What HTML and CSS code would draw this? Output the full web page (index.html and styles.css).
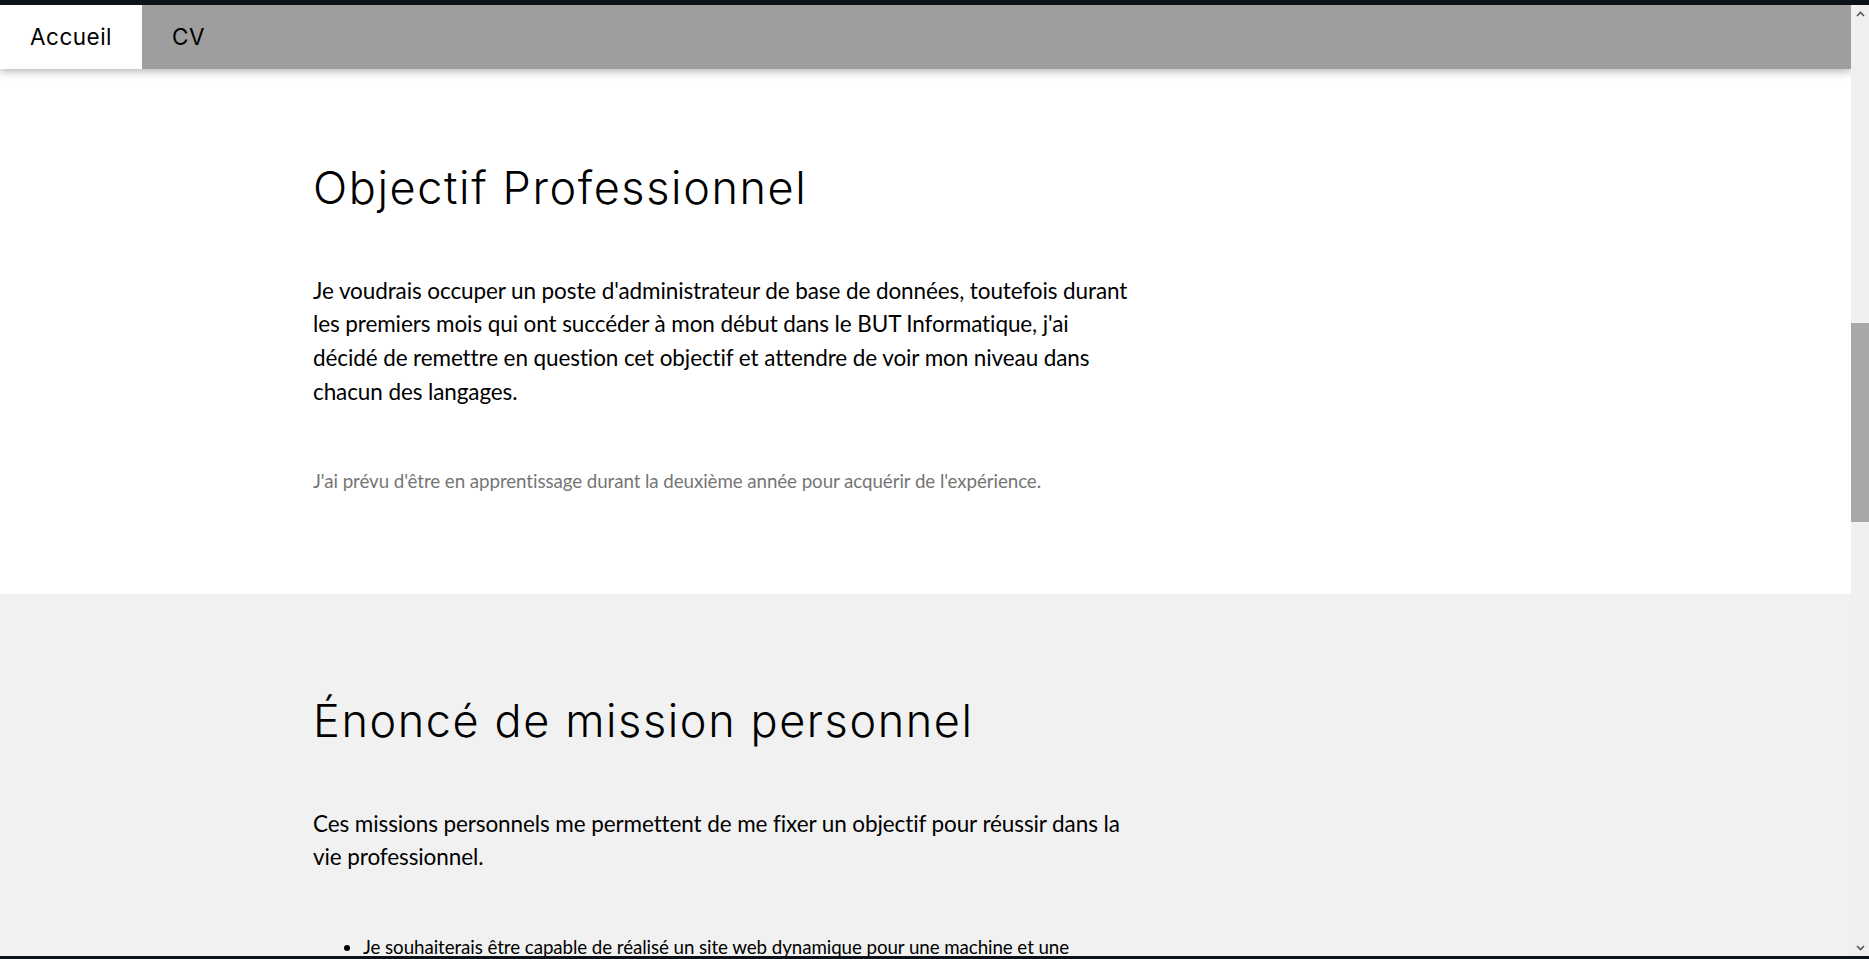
FILE: index.html
```html
<!DOCTYPE html>
<html lang="fr">
<head>
<meta charset="utf-8">
<title>Accueil</title>
<link rel="stylesheet" href="styles.css">
</head>
<body>
<div class="frame">
  <div class="frame-edge top"></div>
  <div class="viewport">
    <div class="page">
      <nav class="topbar">
        <a class="tab active" href="#">Accueil</a>
        <a class="tab" href="#">CV</a>
      </nav>
      <section class="band first">
        <div class="content">
          <div class="twothird">
            <h1 class="title">Objectif Professionnel</h1>
            <h5 class="lead">Je voudrais occuper un poste d'administrateur de base de données, toutefois durant les premiers mois qui ont succéder à mon début dans le BUT Informatique, j'ai décidé de remettre en question cet objectif et attendre de voir mon niveau dans chacun des langages.</h5>
            <p class="note">J'ai prévu d'être en apprentissage durant la deuxième année pour acquérir de l'expérience.</p>
          </div>
        </div>
      </section>
      <section class="band grey">
        <div class="content">
          <div class="twothird">
            <h1 class="title">Énoncé de mission personnel</h1>
            <h5 class="lead">Ces missions personnels me permettent de me fixer un objectif pour réussir dans la vie professionnel.</h5>
            <ul class="list">
              <li>Je souhaiterais être capable de réalisé un site web dynamique pour une machine et une application mobile.</li>
            </ul>
          </div>
        </div>
      </section>
    </div>
    <div class="scrollbar">
      <div class="arrow up"><svg width="9" height="6" viewBox="0 0 9 6"><path d="M1 5 L4.5 1.5 L8 5" fill="none" stroke="#555" stroke-width="1.6"/></svg></div>
      <div class="track">
        <div class="gap-top"></div>
        <div class="thumb"></div>
      </div>
      <div class="arrow down"><svg width="9" height="6" viewBox="0 0 9 6"><path d="M1 1 L4.5 4.5 L8 1" fill="none" stroke="#555" stroke-width="1.6"/></svg></div>
    </div>
  </div>
  <div class="frame-edge bottom"></div>
</div>
</body>
</html>
```
FILE: styles.css
```css
html, body {
  margin: 0;
  padding: 0;
  height: 959px;
  overflow: hidden;
  background: #ffffff;
}
.frame {
  display: flex;
  flex-direction: column;
  height: 959px;
}
.frame-edge {
  background: #0c111a;
  flex: none;
}
.frame-edge.top { height: 5px; }
.frame-edge.bottom { height: 3px; }
.viewport {
  flex: 1;
  display: flex;
  min-height: 0;
}
.page {
  flex: 1;
  overflow: hidden;
  min-width: 0;
  font-family: "Lato", "Liberation Sans", sans-serif;
  font-size: 18.75px;
  line-height: 1.5;
  color: #000;
}
.topbar {
  position: relative;
  z-index: 2;
  display: flex;
  background: #9e9e9e;
  height: 63.75px;
  box-shadow: 0 2.5px 6px 0 rgba(0,0,0,0.16), 0 2.5px 12px 0 rgba(0,0,0,0.12);
}
.tab {
  display: block;
  padding: 15px 30px;
  font-family: "Inter", "Noto Sans", sans-serif;
  font-weight: 400;
  font-size: 22.5px;
  line-height: 33.75px;
  letter-spacing: 0.5px;
  color: #000;
  text-decoration: none;
}
.tab.active {
  background: #ffffff;
}
.band {
  padding: 80px 20px;
}
.band.first {
  padding-top: 72.25px;
  background: #ffffff;
}
.band.grey {
  background: #f1f1f1;
}
.content {
  max-width: 1225px;
  margin: 0 auto;
}
.twothird {
  width: 66.6667%;
}
.title {
  font-family: "Inter", "Noto Sans", sans-serif;
  font-weight: 300;
  font-size: 45px;
  line-height: 67.5px;
  letter-spacing: 1.6px;
  margin: 12.5px 0;
  color: #000;
}
.lead {
  font-size: 22.5px;
  line-height: 33.75px;
  font-weight: 400;
  letter-spacing: -0.1px;
  margin: 12.5px 0;
  padding: 40px 0;
}
.note {
  margin: 18.75px 0;
  letter-spacing: -0.08px;
  color: #757575;
}
.list {
  margin: 18.75px 0;
  padding-left: 50px;
  letter-spacing: -0.08px;
}
.scrollbar {
  width: 18px;
  flex: none;
  background: #f0f0f0;
  display: flex;
  flex-direction: column;
}
.arrow {
  height: 17px;
  display: flex;
  align-items: center;
  justify-content: center;
  flex: none;
}
.track {
  flex: 1;
  display: flex;
  flex-direction: column;
}
.gap-top {
  height: 301px;
  flex: none;
}
.thumb {
  height: 199px;
  background: #a8a8a8;
  flex: none;
}
```
